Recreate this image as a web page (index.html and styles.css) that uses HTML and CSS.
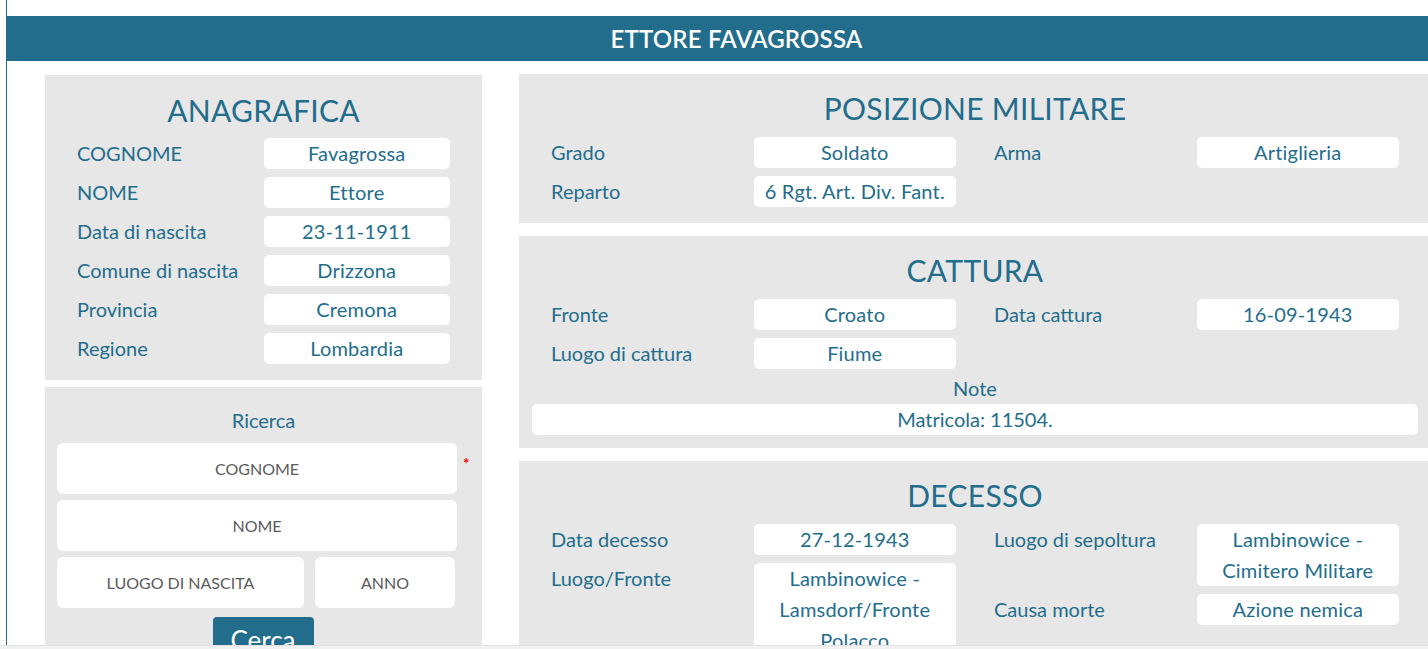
FILE: index.html
```html
<!DOCTYPE html>
<html lang="it">
<head>
<meta charset="utf-8">
<title>Ettore Favagrossa</title>
<link rel="stylesheet" href="styles.css">
</head>
<body>
<div class="page">
  <header class="topbar">ETTORE FAVAGROSSA</header>
  <div class="main">
    <div class="col-left">
      <section class="panel panel-anag">
        <h2 class="ptitle">ANAGRAFICA</h2>
        <div class="rows">
          <div class="kv"><span class="lbl">COGNOME</span><span class="val">Favagrossa</span></div>
          <div class="kv"><span class="lbl">NOME</span><span class="val">Ettore</span></div>
          <div class="kv"><span class="lbl">Data di nascita</span><span class="val">23-11-1911</span></div>
          <div class="kv"><span class="lbl">Comune di nascita</span><span class="val">Drizzona</span></div>
          <div class="kv"><span class="lbl">Provincia</span><span class="val">Cremona</span></div>
          <div class="kv"><span class="lbl">Regione</span><span class="val">Lombardia</span></div>
        </div>
      </section>
      <section class="panel panel-search">
        <div class="search-title">Ricerca</div>
        <div class="srow">
          <input class="inp inp-full" type="text" placeholder="COGNOME">
          <span class="req">*</span>
        </div>
        <div class="srow">
          <input class="inp inp-full" type="text" placeholder="NOME">
        </div>
        <div class="srow srow-split">
          <input class="inp inp-luogo" type="text" placeholder="LUOGO DI NASCITA">
          <input class="inp inp-anno" type="text" placeholder="ANNO">
        </div>
        <div class="btn-row"><button class="btn" type="button">Cerca</button></div>
      </section>
    </div>
    <div class="col-right">
      <section class="panel">
        <h2 class="ptitle">POSIZIONE MILITARE</h2>
        <div class="halves">
          <div class="rows">
            <div class="kv"><span class="lbl">Grado</span><span class="val">Soldato</span></div>
            <div class="kv"><span class="lbl">Reparto</span><span class="val">6 Rgt. Art. Div. Fant.</span></div>
          </div>
          <div class="rows">
            <div class="kv"><span class="lbl">Arma</span><span class="val">Artiglieria</span></div>
          </div>
        </div>
      </section>
      <section class="panel panel-cattura">
        <h2 class="ptitle">CATTURA</h2>
        <div class="halves">
          <div class="rows">
            <div class="kv"><span class="lbl">Fronte</span><span class="val">Croato</span></div>
            <div class="kv"><span class="lbl">Luogo di cattura</span><span class="val">Fiume</span></div>
          </div>
          <div class="rows">
            <div class="kv"><span class="lbl">Data cattura</span><span class="val">16-09-1943</span></div>
          </div>
        </div>
        <div class="note-lbl">Note</div>
        <div class="note-val">Matricola: 11504.</div>
      </section>
      <section class="panel">
        <h2 class="ptitle">DECESSO</h2>
        <div class="halves">
          <div class="rows">
            <div class="kv"><span class="lbl">Data decesso</span><span class="val">27-12-1943</span></div>
            <div class="kv"><span class="lbl">Luogo/Fronte</span><span class="val">Lambinowice - Lamsdorf/Fronte Polacco</span></div>
          </div>
          <div class="rows">
            <div class="kv"><span class="lbl">Luogo di sepoltura</span><span class="val">Lambinowice - Cimitero Militare</span></div>
            <div class="kv"><span class="lbl">Causa morte</span><span class="val">Azione nemica</span></div>
          </div>
        </div>
      </section>
    </div>
  </div>
</div>
<div class="hscroll"></div>
</body>
</html>
```

FILE: styles.css
```css
html, body {
  margin: 0;
  padding: 0;
  overflow: hidden;
  background: #ffffff;
}

body {
  font-family: Lato, "Liberation Sans", sans-serif;
  color: #236d8c;
}

.page {
  margin-left: 6px;
  border-left: 1px solid #236d8c;
  width: 1460px;
  min-height: 100vh;
  padding-top: 16px;
  box-sizing: border-box;
}

.topbar {
  background: #236d8c;
  color: #ffffff;
  height: 45px;
  line-height: 45px;
  text-align: center;
  font-size: 24px;
  font-weight: 600;
  letter-spacing: 0.2px;
}

.main {
  display: flex;
  gap: 37px;
  padding: 13px 36px 0 38px;
  align-items: flex-start;
}

.col-left {
  width: 437px;
  flex: none;
  display: flex;
  flex-direction: column;
  gap: 7px;
  margin-top: 1px;
}

.col-right {
  width: 912px;
  flex: none;
  display: flex;
  flex-direction: column;
  gap: 13px;
}

.panel {
  background: #e7e7e7;
  padding: 16px 32px 16px 32px;
}

.ptitle {
  margin: 0 0 11px 0;
  font-size: 30px;
  line-height: 36px;
  font-weight: 400;
  text-align: center;
  letter-spacing: 0.3px;
}

.panel-anag .ptitle {
  margin-top: 1px;
  margin-bottom: 10px;
}

.rows {
  display: flex;
  flex-direction: column;
  gap: 8px;
}

.kv {
  display: grid;
  grid-template-columns: 1fr 1fr;
  align-items: start;
}

.lbl {
  font-size: 20px;
  line-height: 31px;
  white-space: nowrap;
}

.val {
  background: #ffffff;
  border-radius: 5px;
  font-size: 20px;
  line-height: 31px;
  text-align: center;
  padding: 0 4px;
  letter-spacing: 0.2px;
}

.halves {
  display: grid;
  grid-template-columns: 1fr 1fr;
  column-gap: 38px;
  align-items: start;
}

.panel-cattura {
  padding-bottom: 13px;
}

.note-lbl {
  margin-top: 4px;
  font-size: 20px;
  line-height: 31px;
  text-align: center;
}

.note-val {
  margin: 0 -19px;
  background: #ffffff;
  border-radius: 5px;
  font-size: 20px;
  line-height: 31px;
  text-align: center;
}

/* search */
.panel-search {
  padding: 18px 12px 20px 12px;
}

.search-title {
  font-size: 20px;
  line-height: 31px;
  text-align: center;
  margin-bottom: 7px;
}

.srow {
  display: flex;
  align-items: flex-start;
  margin-bottom: 6px;
}

.srow-split {
  gap: 11px;
  margin-bottom: 9px;
}

.inp {
  height: 51px;
  border: none;
  border-radius: 6px;
  background: #ffffff;
  font-family: Lato, "Liberation Sans", sans-serif;
  font-size: 16px;
  color: #555555;
  text-align: center;
  padding: 0;
  box-sizing: border-box;
  outline: none;
}

.inp::placeholder {
  color: #5a5a5a;
  opacity: 1;
}

.inp-full {
  width: 400px;
}

.inp-luogo {
  width: 247px;
}

.inp-anno {
  width: 140px;
}

.req {
  color: #ff0000;
  font-size: 15px;
  font-weight: 700;
  line-height: 15px;
  margin-left: 6px;
  margin-top: 13px;
}

.btn-row {
  display: flex;
  justify-content: center;
}

.btn {
  width: 101px;
  height: 46px;
  border: none;
  border-radius: 4px;
  background: #236d8c;
  color: #ffffff;
  font-family: Lato, "Liberation Sans", sans-serif;
  font-size: 26px;
  line-height: 46px;
  padding: 0;
  margin-left: -1px;
}

.hscroll {
  position: fixed;
  left: 0;
  right: 0;
  bottom: 0;
  height: 3px;
  background: #f1f1f1;
  border-top: 1px solid #e2e2e2;
}
```
